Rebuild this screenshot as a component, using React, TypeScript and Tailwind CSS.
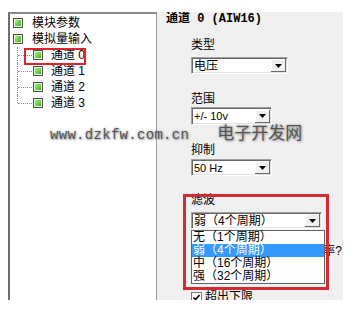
import React from 'react';

function NodeIcon() {
  return (
    <span className="block w-[10px] h-[10px] shrink-0 border border-[#505050] bg-[#dff7d0] p-px">
      <span className="block w-full h-full bg-linear-to-br from-[#a6ee7c] to-[#43b324]" />
    </span>
  );
}

interface TreeRowProps {
  label: string;
  child?: boolean;
  last?: boolean;
}

function TreeRow({ label, child, last }: TreeRowProps) {
  return (
    <div className="flex items-center h-[16px]">
      {child ? (
        <div className="relative w-[23px] h-full shrink-0">
          <span
            className={`absolute left-[7px] top-0 border-l border-dotted border-[#8a8a8a] ${last ? 'h-[8px]' : 'h-full'}`}
          />
          <span className="absolute left-[8px] top-[8px] w-[14px] border-t border-dotted border-[#8a8a8a]" />
        </div>
      ) : (
        <div className="w-[3px] shrink-0" />
      )}
      <NodeIcon />
      <span className={child ? 'ml-[8px]' : 'ml-[9px]'}>{label}</span>
    </div>
  );
}

interface SelectProps {
  value: string;
  className: string;
  small?: boolean;
}

function Select({ value, className, small }: SelectProps) {
  return (
    <div
      className={`flex items-center bg-white border border-t-[#a0a0a0] border-l-[#a0a0a0] border-r-white border-b-white shadow-[inset_1px_1px_0_#696969,inset_-1px_-1px_0_#e3e3e3] ${className}`}
    >
      <span className={`flex-1 pl-[2px] whitespace-nowrap ${small ? 'text-[11px]' : 'text-[12px]'}`}>{value}</span>
      <span className="w-[15px] h-[13px] mr-px flex items-center justify-center bg-[#f0f0f0] shadow-[inset_-1px_-1px_0_#696969,inset_1px_1px_0_#ffffff]">
        <svg width="7" height="4" viewBox="0 0 7 4">
          <polygon points="0,0 7,0 3.5,4" fill="#000" />
        </svg>
      </span>
    </div>
  );
}

const filterOptions = ['无（1个周期）', '弱（4个周期）', '中（16个周期）', '强（32个周期）'];

export default function App() {
  return (
    <div className="relative w-[356px] h-[311px] bg-white overflow-hidden text-black text-[12px] leading-[14px] font-['Liberation_Sans','Noto_Sans_CJK_SC',sans-serif]">
      <div className="ml-[8px] mt-[12px] w-[335px] h-[288px] flex">
        {/* tree */}
        <div className="relative w-[149px] h-full bg-white border-t-2 border-l-2 border-r border-t-[#8a8a8a] border-l-[#6e6e6e] border-r-[#9a9a9a] pt-px">
          <TreeRow label="模块参数" />
          <TreeRow label="模拟量输入" />
          <TreeRow label="通道 0" child />
          <TreeRow label="通道 1" child />
          <TreeRow label="通道 2" child />
          <TreeRow label="通道 3" child last />
          <div className="absolute left-[14px] top-[34px] w-[62px] h-[17px] border-2 border-[#e0242c]" />
        </div>

        {/* settings panel */}
        <div className="relative flex-1 bg-[#f0f0f0] overflow-hidden">
          <div className="pl-[9px] leading-[14px] font-bold font-['Liberation_Mono','Noto_Sans_CJK_SC',monospace]">
            通道 0 (AIW16)
          </div>
          <div className="ml-[34px]">
            <div className="mt-[12px]">类型</div>
            <Select value="电压" className="mt-[5px] w-[97px] h-[17px]" />

            <div className="mt-[18px]">范围</div>
            <Select value="+/- 10v" small className="mt-px w-[81px] h-[18px]" />

            <div className="mt-[18px]">抑制</div>
            <Select value="50 Hz" small className="mt-[2px] w-[81px] h-[17px]" />

            <div className="mt-[17px]">滤波</div>
            <div className="relative mt-[5px]">
              <Select value="弱（4个周期）" className="w-[131px] h-[17px]" />
              <div className="absolute left-0 top-[18px] z-10 w-[134px] border border-[#646464] bg-white">
                {filterOptions.map((opt, i) => (
                  <div
                    key={opt}
                    className={`h-[13px] leading-[13px] pl-px whitespace-nowrap ${i === 1 ? 'bg-[#3399ff] text-white' : ''}`}
                  >
                    {opt}
                  </div>
                ))}
              </div>
            </div>

            <div className="mt-[15px] pr-[1px] text-right whitespace-nowrap">启用报警采样率?</div>

            <div className="mt-[32px] flex items-center gap-[3px]">
              <span className="w-[11px] h-[11px] flex items-center justify-center bg-white border border-[#7a7a7a]">
                <svg width="7" height="7" viewBox="0 0 7 7">
                  <polyline points="0.5,3.5 2.5,5.5 6.5,1" fill="none" stroke="#000" strokeWidth="1.6" />
                </svg>
              </span>
              <span>超出下限</span>
            </div>
          </div>

          <div className="absolute left-[26px] top-[182px] w-[146px] h-[96px] border-[3px] border-[#d42a32]" />
        </div>
      </div>

      {/* watermark */}
      <div className="absolute left-[50px] top-[123px] flex items-baseline whitespace-nowrap text-[#555555] [text-shadow:0_0_3px_#9a9a9a,1px_1px_2px_#b0b0b0]">
        <span className="text-[14px] tracking-[0.3px] font-['Liberation_Mono',monospace]">www.dzkfw.com.cn</span>
        <span className="ml-[28px] text-[17px] leading-[18px] font-['Noto_Sans_CJK_SC',sans-serif]">电子开发网</span>
      </div>
    </div>
  );
}
